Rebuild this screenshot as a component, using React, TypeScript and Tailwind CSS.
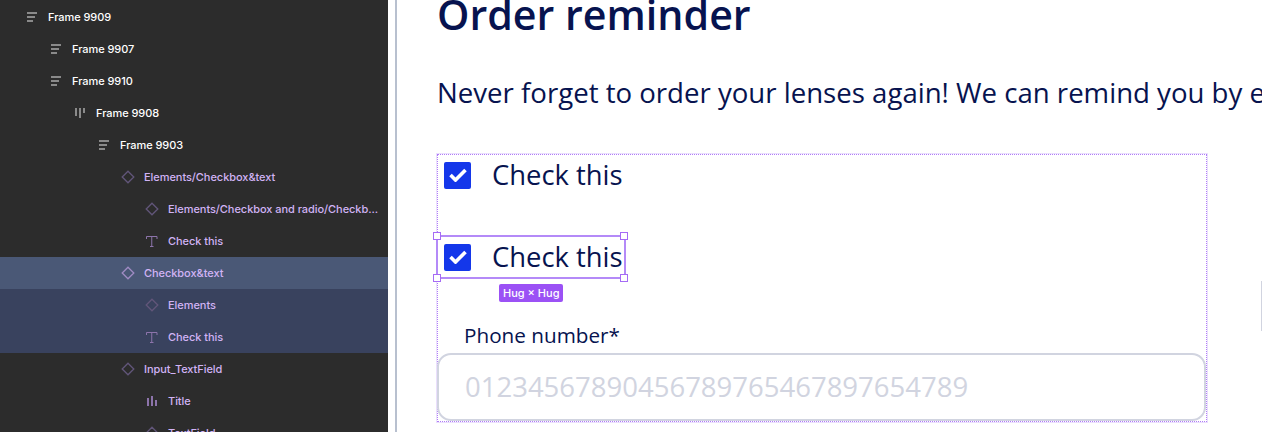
const sans = "font-['Inter',sans-serif]";

type Kind = 'frame' | 'frameV' | 'diamond' | 'text' | 'bars';

const rows: { label: string; indent: number; kind: Kind; purple?: boolean; bg?: string; strong?: boolean }[] = [
  { label: 'Frame 9909', indent: 24, kind: 'frame' },
  { label: 'Frame 9907', indent: 48, kind: 'frame' },
  { label: 'Frame 9910', indent: 48, kind: 'frame' },
  { label: 'Frame 9908', indent: 72, kind: 'frameV' },
  { label: 'Frame 9903', indent: 96, kind: 'frame' },
  { label: 'Elements/Checkbox&text', indent: 120, kind: 'diamond', purple: true },
  { label: 'Elements/Checkbox and radio/Checkb...', indent: 144, kind: 'diamond', purple: true },
  { label: 'Check this', indent: 144, kind: 'text', purple: true },
  { label: 'Checkbox&text', indent: 120, kind: 'diamond', purple: true, bg: 'bg-[#4a5876]', strong: true },
  { label: 'Elements', indent: 144, kind: 'diamond', purple: true, bg: 'bg-[#39425e]' },
  { label: 'Check this', indent: 144, kind: 'text', purple: true, bg: 'bg-[#39425e]' },
  { label: 'Input_TextField', indent: 120, kind: 'diamond', purple: true },
  { label: 'Title', indent: 144, kind: 'bars', purple: true },
  { label: 'TextField', indent: 144, kind: 'diamond', purple: true },
];

function LayerIcon({ kind, strong }: { kind: Kind; strong?: boolean }) {
  if (kind === 'frame') {
    return (
      <svg width="16" height="16" viewBox="0 0 16 16" className="shrink-0 text-[#8a8a8a]" fill="currentColor">
        <rect x="3" y="3" width="10" height="2" />
        <rect x="3" y="7" width="8" height="2" />
        <rect x="3" y="11" width="6" height="2" />
      </svg>
    );
  }
  if (kind === 'frameV') {
    return (
      <svg width="16" height="16" viewBox="0 0 16 16" className="shrink-0 text-[#8a8a8a]" fill="currentColor">
        <rect x="3" y="3" width="2" height="8" />
        <rect x="7" y="3" width="2" height="10" />
        <rect x="11" y="3" width="2" height="5" />
      </svg>
    );
  }
  if (kind === 'bars') {
    return (
      <svg width="16" height="16" viewBox="0 0 16 16" className="shrink-0 text-[#8d74ab]" fill="currentColor">
        <rect x="3" y="5" width="2" height="8" />
        <rect x="7" y="3" width="2" height="10" />
        <rect x="11" y="7" width="2" height="6" />
      </svg>
    );
  }
  if (kind === 'text') {
    return (
      <svg width="16" height="16" viewBox="0 0 16 16" className="shrink-0" fill="none" stroke="#8d74ab" strokeWidth="1">
        <path d="M2.5 6V3.5h10.5V6M7.75 3.5v10M6 13.5h3.5" />
      </svg>
    );
  }
  return (
    <svg width="16" height="16" viewBox="0 0 16 16" className="shrink-0" fill="none" stroke={strong ? '#a18bc4' : '#62567a'} strokeWidth="1.3">
      <path d="M8 2.2 13.8 8 8 13.8 2.2 8Z" />
    </svg>
  );
}

function Check() {
  return (
    <span className="flex h-[27px] w-[27px] shrink-0 items-center justify-center rounded-[2px] bg-[#1437ea]">
      <svg width="18" height="14" viewBox="0 0 18 14" fill="none" stroke="white" strokeWidth="3.6">
        <path d="M1.5 7 6.5 12 16.5 2" />
      </svg>
    </span>
  );
}

function Handle({ className }: { className: string }) {
  return <span className={`absolute h-2 w-2 border border-[#a56bf5] bg-white ${className}`} />;
}

export default function App() {
  return (
    <div className="flex h-[432px] w-[1262px] overflow-hidden bg-white">
      {/* layers panel */}
      <aside className={`h-full w-[388px] shrink-0 overflow-hidden bg-[#2c2c2c] pt-px ${sans}`}>
        {rows.map((row, i) => (
          <div
            key={i}
            className={`flex h-8 items-center gap-2 text-[11px] font-medium tracking-[-0.005em] ${row.bg ?? ''} ${row.purple ? 'text-[#d1b3f5]' : 'text-white'}`}
            style={{ paddingLeft: row.indent }}
          >
            <LayerIcon kind={row.kind} strong={row.strong} />
            <span className="whitespace-nowrap">{row.label}</span>
          </div>
        ))}
      </aside>
      <div className="w-[9px] shrink-0 border-r-2 border-[#b8c0cf] bg-white" />

      {/* canvas */}
      <main className="relative flex-1 overflow-hidden font-['Open_Sans',sans-serif] text-[#07134f]">
        <h1 className="mt-[-10px] ml-[40px] text-[41.2px] leading-[48px] font-semibold whitespace-nowrap">Order reminder</h1>
        <p className="mt-[36px] ml-[40px] text-[27.6px] leading-[36px] whitespace-nowrap">
          Never forget to order your lenses again! We can remind you by email
        </p>

        <div className="mt-[44px] ml-[40px] h-[268px] w-[770px] border border-dotted border-[#b07cf7] outline outline-[#eadffd]">
          <div className="flex h-[40px] items-center gap-[21px] pl-[6px]">
            <Check />
            <span className="text-[27.4px] leading-[36px]">Check this</span>
          </div>

          <div className="relative mt-[40px] -ml-[2px] flex h-[44px] w-[190px] items-center gap-[21px] border-2 border-[#b48af8] pl-[6px]">
            <Check />
            <span className="text-[27.4px] leading-[36px] whitespace-nowrap">Check this</span>
            <Handle className="-top-[5px] -left-[5px]" />
            <Handle className="-top-[5px] -right-[4px]" />
            <Handle className="-bottom-[5px] -left-[5px]" />
            <Handle className="-right-[4px] -bottom-[5px]" />
            <span className={`absolute top-[47px] left-[61px] rounded-[2px] bg-[#9b51f5] px-1 text-[11px] leading-[18px] font-medium whitespace-nowrap text-white ${sans}`}>
              Hug × Hug
            </span>
          </div>

          <label className="mt-[41px] ml-[26px] block text-[20.7px] leading-[30px]">Phone number*</label>
          <div className="mt-[3px] -ml-px flex h-[68px] w-[769px] items-center rounded-[14px] border-2 border-[#d1d4e0] pl-[26px] text-[27.5px] text-[#d1d4e0]">
            01234567890456789765467897654789
          </div>
        </div>

        <div className="absolute top-[281px] right-0 h-[50px] w-px bg-[#d1d4e0]" />
      </main>
    </div>
  );
}
